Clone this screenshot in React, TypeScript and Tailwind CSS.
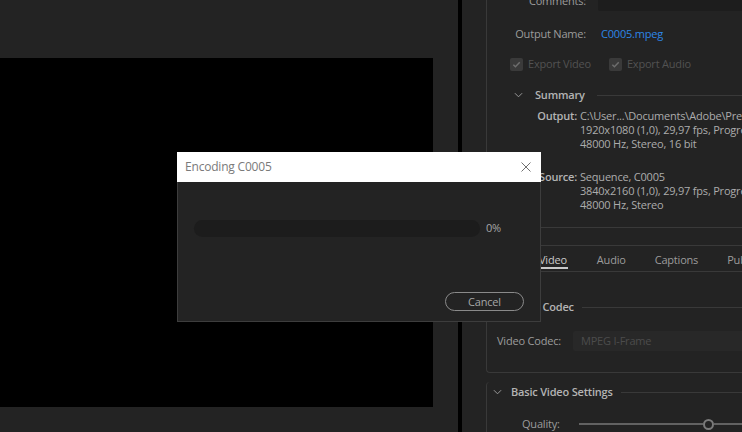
import * as React from "react";

const Chevron = ({ className }: { className?: string }) => (
  <svg viewBox="0 0 10 6" className={className} fill="none">
    <path d="M1 1l4 4 4-4" stroke="#9a9a9a" strokeWidth="1.1" />
  </svg>
);

const Check = () => (
  <div className="w-[13px] h-[13px] rounded-[2px] bg-[#3a3a3a] flex items-center justify-center">
    <svg viewBox="0 0 10 10" className="w-[9px] h-[9px]" fill="none">
      <path d="M1.5 5.2l2.3 2.3 4.8-5" stroke="#6e6e6e" strokeWidth="1.6" />
    </svg>
  </div>
);

const SummaryBlock = ({ label, lines }: { label: string; lines: string[] }) => (
  <div className="flex leading-[14px]">
    <div className="w-[90px] text-right font-semibold text-[#b4b4b4]">{label}</div>
    <div className="ml-[3px] text-[#acacac] whitespace-nowrap">
      {lines.map((l) => (
        <div key={l}>{l}</div>
      ))}
    </div>
  </div>
);

const EncodingDialog = () => (
  <div className="absolute left-[177px] top-[152px] w-[364px] h-[170px] bg-[#232323] border border-[#3d3d3d] flex flex-col">
    {/* Title bar */}
    <div className="h-[30px] bg-white flex items-center justify-between pl-[8px] pr-[10px] -mx-px -mt-px">
      <span className="text-[12px] tracking-[-0.2px] text-[#7a7a7a]">Encoding C0005</span>
      <svg viewBox="0 0 10 10" className="w-[10px] h-[10px]" fill="none">
        <path d="M0.5 0.5l9 9M9.5 0.5l-9 9" stroke="#707070" strokeWidth="1" />
      </svg>
    </div>

    {/* Progress */}
    <div className="flex items-center mt-[38px] pl-[16px]">
      <div className="w-[286px] h-[17px] rounded-full bg-[#1c1c1c]" />
      <span className="ml-[6px] text-[11px] text-[#a6a6a6]">0%</span>
    </div>

    {/* Actions */}
    <div className="flex justify-end mt-auto mb-[10px] pr-[16px]">
      <button className="w-[79px] h-[19px] rounded-full border border-[#8a8a8a] text-[11px] leading-none text-[#a6a6a6]">
        Cancel
      </button>
    </div>
  </div>
);

export default function App() {
  return (
    <div
      className="relative w-[742px] h-[432px] overflow-hidden flex bg-[#232323] text-[11px] tracking-[-0.2px]"
      style={{ fontFamily: '"Open Sans", "Noto Sans", sans-serif' }}
    >
      {/* Program monitor */}
      <div className="w-[458px] shrink-0 pt-[58px]">
        <div className="w-[433px] h-[349px] bg-black" />
      </div>
      <div className="w-[4px] shrink-0 bg-black" />

      {/* Export settings panel */}
      <div className="flex-1 overflow-hidden pl-[24px]">
        <div className="w-[400px]">
          <div className="border-l border-b border-[#393939] rounded-bl-[4px] pb-[21px]">
            {/* Comments */}
            <div className="flex items-center h-[20px] -mt-[9px]">
              <div className="w-[99px] text-right text-[#9c9c9c]">Comments:</div>
              <div className="ml-[12px] flex-1 h-full bg-[#1d1d1d] rounded-[2px]" />
            </div>

            {/* Output name */}
            <div className="flex items-center h-[20px] mt-[13px]">
              <div className="w-[99px] text-right text-[#9c9c9c]">Output Name:</div>
              <div className="ml-[12px] pl-[3px] text-[#2d86e6]">C0005.mpeg</div>
            </div>

            {/* Export checkboxes */}
            <div className="flex items-center h-[20px] mt-[10px] pl-[23px] text-[#525252]">
              <Check />
              <span className="ml-[5px]">Export Video</span>
              <div className="ml-[18px]">
                <Check />
              </div>
              <span className="ml-[5px]">Export Audio</span>
            </div>

            {/* Summary */}
            <div className="flex items-center h-[20px] mt-[11px] pl-[27px]">
              <Chevron className="w-[9px] h-[6px]" />
              <span className="ml-[12px] font-semibold text-[#b4b4b4]">Summary</span>
              <div className="ml-[12px] flex-1 h-px bg-[#393939]" />
            </div>
            <div className="mt-[4px]">
              <SummaryBlock
                label="Output:"
                lines={[
                  "C:\\User...\\Documents\\Adobe\\Premiere Pro",
                  "1920x1080 (1,0), 29,97 fps, Progressive",
                  "48000 Hz, Stereo, 16 bit",
                ]}
              />
            </div>
            <div className="mt-[19px] pb-[15px] border-b border-[#393939] ml-[10px] -mr-px">
              <div className="-ml-[10px]">
                <SummaryBlock
                  label="Source:"
                  lines={[
                    "Sequence, C0005",
                    "3840x2160 (1,0), 29,97 fps, Progressive",
                    "48000 Hz, Stereo",
                  ]}
                />
              </div>
            </div>

            {/* Tabs */}
            <div className="mt-[17px] h-[27px] border-t border-b border-[#393939] ml-[10px] flex items-start pl-[41px] gap-[29px] text-[#9c9c9c]">
              <div className="flex flex-col items-center pt-[7px]">
                <span className="leading-[14px] px-[1px] text-[#c8c8c8]">Video</span>
                <div className="w-full h-[2px] bg-[#c8c8c8]" />
              </div>
              <span className="pt-[7px] leading-[14px]">Audio</span>
              <span className="pt-[7px] leading-[14px]">Captions</span>
              <span className="pt-[7px] leading-[14px]">Publish</span>
            </div>

            {/* Video codec */}
            <div className="flex items-center h-[20px] mt-[25px] pl-[6px]">
              <Chevron className="w-[9px] h-[6px]" />
              <span className="ml-[9px] font-semibold text-[#b4b4b4]">Video Codec</span>
              <div className="ml-[8px] flex-1 h-px bg-[#393939]" />
            </div>
            <div className="flex items-center h-[20px] mt-[14px] pl-[10px]">
              <span className="text-[#9c9c9c]">Video Codec:</span>
              <div className="ml-[12px] flex-1 h-full rounded-[2px] bg-[#282828] flex items-center pl-[8px] text-[#4c4c4c]">
                MPEG I-Frame
              </div>
            </div>
          </div>

          {/* Basic video settings */}
          <div className="mt-[18px] border-l border-[#393939] rounded-tl-[4px] h-[60px]">
            <div className="flex items-center h-[20px] -mt-[9px] pl-[6px]">
              <Chevron className="w-[9px] h-[6px]" />
              <span className="ml-[9px] font-semibold text-[#b4b4b4]">Basic Video Settings</span>
              <div className="ml-[8px] flex-1 h-px bg-[#393939]" />
            </div>
            <div className="flex items-center h-[20px] mt-[12px] pl-[35px]">
              <span className="text-[#9c9c9c]">Quality:</span>
              <div className="ml-[19px] flex-1 flex items-center">
                <div className="w-[124px] h-[2px] bg-[#626262]" />
                <div className="w-[11px] h-[11px] rounded-full border-2 border-[#7a7a7a] bg-[#232323]" />
                <div className="flex-1 h-[2px] bg-[#626262]" />
              </div>
            </div>
          </div>
        </div>
      </div>

      <EncodingDialog />
    </div>
  );
}
